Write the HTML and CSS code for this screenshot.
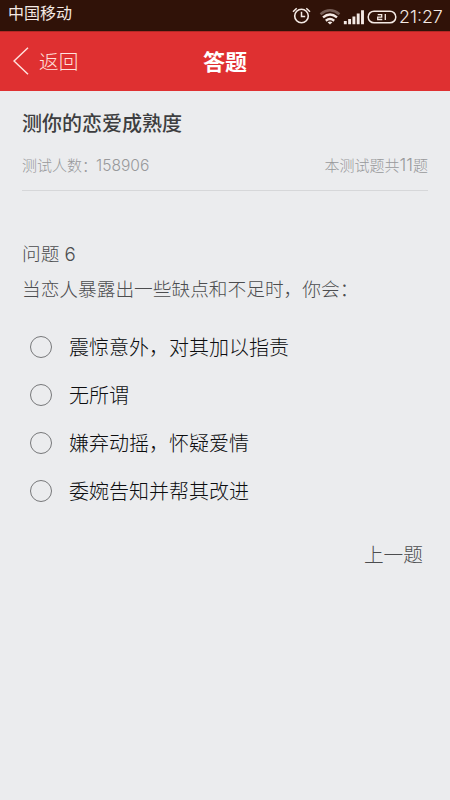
FILE: index.html
```html
<!DOCTYPE html>
<html lang="zh-CN">
<head>
<meta charset="utf-8">
<title>答题</title>
<link rel="stylesheet" href="styles.css">
</head>
<body>
<div class="status">
  <span class="carrier">中国移动</span>
  <svg class="status-icons" width="106" height="24" viewBox="0 0 106 24" fill="none" stroke="#f4e9e4">
    <circle cx="9.5" cy="13" r="6.8" stroke-width="1.6"/>
    <path d="M9.5 8.8v4.7h3.7M1 8.8l3.7-3.5M18 8.8l-3.7-3.5" stroke-width="1.5"/>
    <path d="M28.5 11.2Q38 3.4 47.5 11.2" stroke="#765e56" stroke-width="2.4"/>
    <path d="M31 14.4Q38 8.6 45 14.4M33.8 17.7Q38 14.3 42.2 17.7" stroke-width="2.4"/>
    <path d="M35.6 19.2Q38 17.8 40.4 19.2L38 21.5z" fill="#f4e9e4" stroke="none"/>
    <path d="M53.3 18V21.2M57.6 16V21.2M61.9 13.5V21.2M66.2 10.5V21.2M70.5 7.2V21.2" stroke-width="2.9"/>
    <rect x="76.2" y="8.2" width="27.6" height="11.6" rx="5.8" stroke-width="1.5"/>
    <path d="M85.7 11.7h4v2.4h-4v2.4h4.6M93.3 11v6" stroke-width="1.3"/>
  </svg>
  <span class="clock">21:27</span>
</div>
<header class="bar">
  <a class="back">
    <svg width="16" height="28" viewBox="0 0 16 28" fill="none" stroke="#ffe2de" stroke-width="1.5"><path d="M15 .8L1 14l14 13.2"/></svg>
    <span>返回</span>
  </a>
  <h1>答题</h1>
</header>
<main>
  <h2>测你的恋爱成熟度</h2>
  <div class="meta">
    <span>测试人数：<span class="count">158906</span></span>
    <span>本测试题共<span class="total">11</span>题</span>
  </div>
  <div class="number">问题 <span class="digit">6</span></div>
  <p class="question">当恋人暴露出一些缺点和不足时，你会：</p>
  <ul class="options">
    <li><i class="radio"></i>震惊意外，对其加以指责</li>
    <li><i class="radio"></i>无所谓</li>
    <li><i class="radio"></i>嫌弃动摇，怀疑爱情</li>
    <li><i class="radio"></i>委婉告知并帮其改进</li>
  </ul>
  <a class="prev">上一题</a>
</main>
</body>
</html>
```
FILE: styles.css
```css
* { box-sizing: border-box; }
body {
  margin: 0;
  height: 800px;
  overflow: hidden;
  background: #ebecee;
  font-family: "Noto Sans CJK SC", sans-serif;
  font-weight: 300;
}
h1, h2, p, ul { margin: 0; padding: 0; }
.status {
  height: 31px;
  background: #301208;
  color: #f4e9e4;
  display: flex;
  align-items: flex-start;
  padding: 0 7px 0 8px;
}
.carrier { font-size: 16px; line-height: 25px; font-weight: 400; margin-right: auto; }
.status-icons { flex: none; margin-top: 3px; margin-right: 1px; }
.clock { font: 300 17.8px/33px Inter, sans-serif; width: 44px; white-space: nowrap; }
.bar {
  height: 60px;
  background: #df3031;
  border-top: 1px solid #b52825;
  display: grid;
  grid-template-columns: 1fr auto 1fr;
  align-items: center;
  color: #fff;
}
.back {
  display: flex;
  align-items: center;
  gap: 10px;
  padding-left: 13px;
  margin-top: -1px;
  font-size: 19.7px;
  line-height: 30px;
  color: #ffe2de;
}
.bar h1 { font-size: 22px; line-height: 30px; margin-top: -3px; font-weight: 700; }
main { padding: 17px 22px 0; display: flex; flex-direction: column; }
h2 { font-size: 20px; line-height: 30px; font-weight: 500; color: #3d3e40; }
.meta {
  display: flex;
  justify-content: space-between;
  margin-top: 14px;
  height: 39px;
  border-bottom: 1px solid #d6d7d9;
  font-size: 15px;
  line-height: 25px;
  color: #98999b;
}
.count { font: 300 15.6px/1 Inter, sans-serif; margin-left: -1px; }
.total { font: 300 17px/1 Inter, sans-serif; }
.number { margin-top: 47px; font-size: 18.7px; line-height: 30px; color: #4c4d4f; }
.digit { font-family: Inter, sans-serif; line-height: 1; margin-left: 1px; }
.question { margin-top: 5px; font-size: 18.7px; line-height: 30px; color: #4c4d4f; white-space: nowrap; }
.options { list-style: none; margin-top: 20px; }
.options li {
  display: flex;
  align-items: center;
  gap: 17px;
  height: 48px;
  padding-left: 8px;
  font-size: 20px;
  line-height: 30px;
  color: #0c0d0f;
}
.radio { width: 22px; height: 22px; border: 1px solid #77787a; border-radius: 50%; }
.prev { align-self: flex-end; margin: 24px 5px 0 0; font-size: 19.7px; line-height: 30px; color: #4c4d4f; }
```
